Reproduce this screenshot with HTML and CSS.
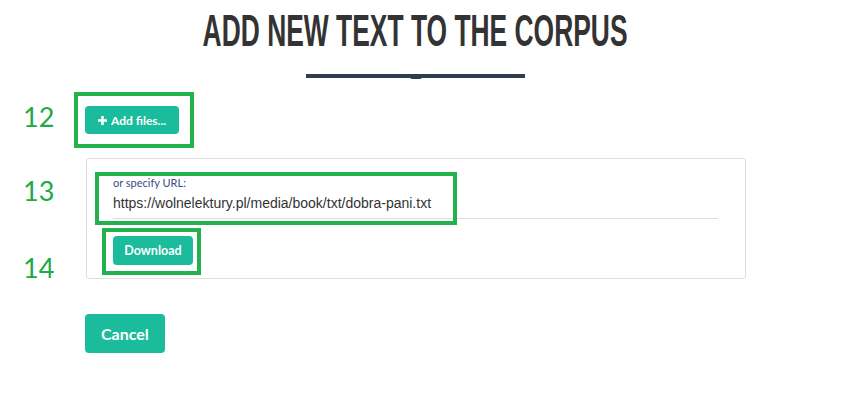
FILE: index.html
```html
<!DOCTYPE html>
<html lang="en">
<head>
    <meta charset="UTF-8">
    <meta name="viewport" content="width=device-width, initial-scale=1.0">
    <title>Add new text to the corpus</title>
    <link rel="stylesheet" href="styles.css">
</head>
<body>
    <div class="page">
        <div class="heading">
            <h1 class="title">ADD NEW TEXT TO THE CORPUS</h1>
            <div class="title-line"></div>
        </div>

        <div class="step step-12">
            <span class="step-num">12</span>
            <button class="btn btn-small" id="add-files">
                <svg class="plus" width="9" height="9" viewBox="0 0 9 9"><path d="M3.2 0h2.6v3.2H9v2.6H5.8V9H3.2V5.8H0V3.2h3.2z" fill="#fff"/></svg>
                Add files...
            </button>
        </div>

        <div class="panel">
            <div class="field step step-13">
                <span class="step-num">13</span>
                <label for="url">or specify URL:</label>
                <input type="text" id="url" value="https://wolnelektury.pl/media/book/txt/dobra-pani.txt">
            </div>
            <div class="step step-14">
                <span class="step-num">14</span>
                <button class="btn btn-small" id="download">Download</button>
            </div>
        </div>

        <button class="btn btn-large" id="cancel">Cancel</button>
    </div>
</body>
</html>
```

FILE: styles.css
```css
body {
    margin: 0;
    font-family: Lato, "Open Sans", sans-serif;
    background-color: #fff;
    color: #333;
}
.page {
    width: 661px;
    margin-left: 85px;
    position: relative;
}
.heading {
    display: flex;
    flex-direction: column;
    align-items: center;
    padding-top: 6px;
}
/* no Oswald offline: bold sans squeezed to the same width */
.title {
    margin: 0;
    font-family: "Liberation Sans", Arial, sans-serif;
    font-weight: 700;
    font-size: 44px;
    line-height: 50px;
    color: #333;
    white-space: nowrap;
    transform: scaleX(0.6);
}
.title-line {
    position: relative;
    width: 219px;
    height: 4px;
    margin-top: 18px;
    background-color: #2c3e50;
}
.title-line::after {
    content: "";
    position: absolute;
    left: 104px;
    top: 3px;
    width: 12px;
    height: 2px;
    border-radius: 0 0 6px 6px;
    background-color: #2c3e50;
}
.btn {
    border: none;
    border-radius: 4px;
    background-color: #1abc9c;
    color: #fff;
    font-family: Lato, sans-serif;
    font-weight: 700;
    cursor: pointer;
}
.btn-small {
    height: 28px;
    padding: 0 12px;
    font-size: 12px;
}
.btn-large {
    height: 39px;
    padding: 0 16px;
    font-size: 16px;
    margin-top: 35px;
}
#add-files {
    display: flex;
    align-items: center;
    gap: 4px;
    width: 94px;
    padding: 0 0 0 13px;
}
#download {
    width: 80px;
    height: 29px;
    font-size: 12.5px;
    padding: 0;
}
.step {
    position: relative;
}
.step::after {
    content: "";
    position: absolute;
    border: 4px solid #22b14c;
    pointer-events: none;
}
.step-num {
    position: absolute;
    font-family: Lato, sans-serif;
    font-size: 27px;
    line-height: 1;
    color: #22a845;
}
.step-12 {
    display: inline-block;
    margin-top: 28px;
}
.step-12::after {
    inset: -14px -15px -14px -11px;
}
.step-12 .step-num {
    left: -62px;
    top: -3px;
}
.panel {
    margin-top: 24px;
    margin-left: 1px;
    border: 1px solid #ddd;
    border-radius: 3px;
    padding: 18px 27px 13px 26px;
}
.field {
    display: flex;
    flex-direction: column;
}
.step-13::after {
    left: -18px;
    top: -5px;
    width: 362px;
    height: 53px;
    box-sizing: border-box;
}
.step-13 .step-num {
    left: -90px;
    top: 0;
}
label {
    font-size: 11px;
    color: #3d4b86;
    line-height: 12px;
}
input[type="text"] {
    border: none;
    border-bottom: 1px solid #ddd;
    padding: 6px 0 7px;
    font-family: "Liberation Sans", Arial, sans-serif;
    font-size: 14px;
    color: #333;
    outline: none;
}
.step-14 {
    display: inline-block;
    margin-top: 17px;
}
.step-14::after {
    inset: -8px -8px -10px -11px;
}
.step-14 .step-num {
    left: -90px;
    top: 18px;
}
```
